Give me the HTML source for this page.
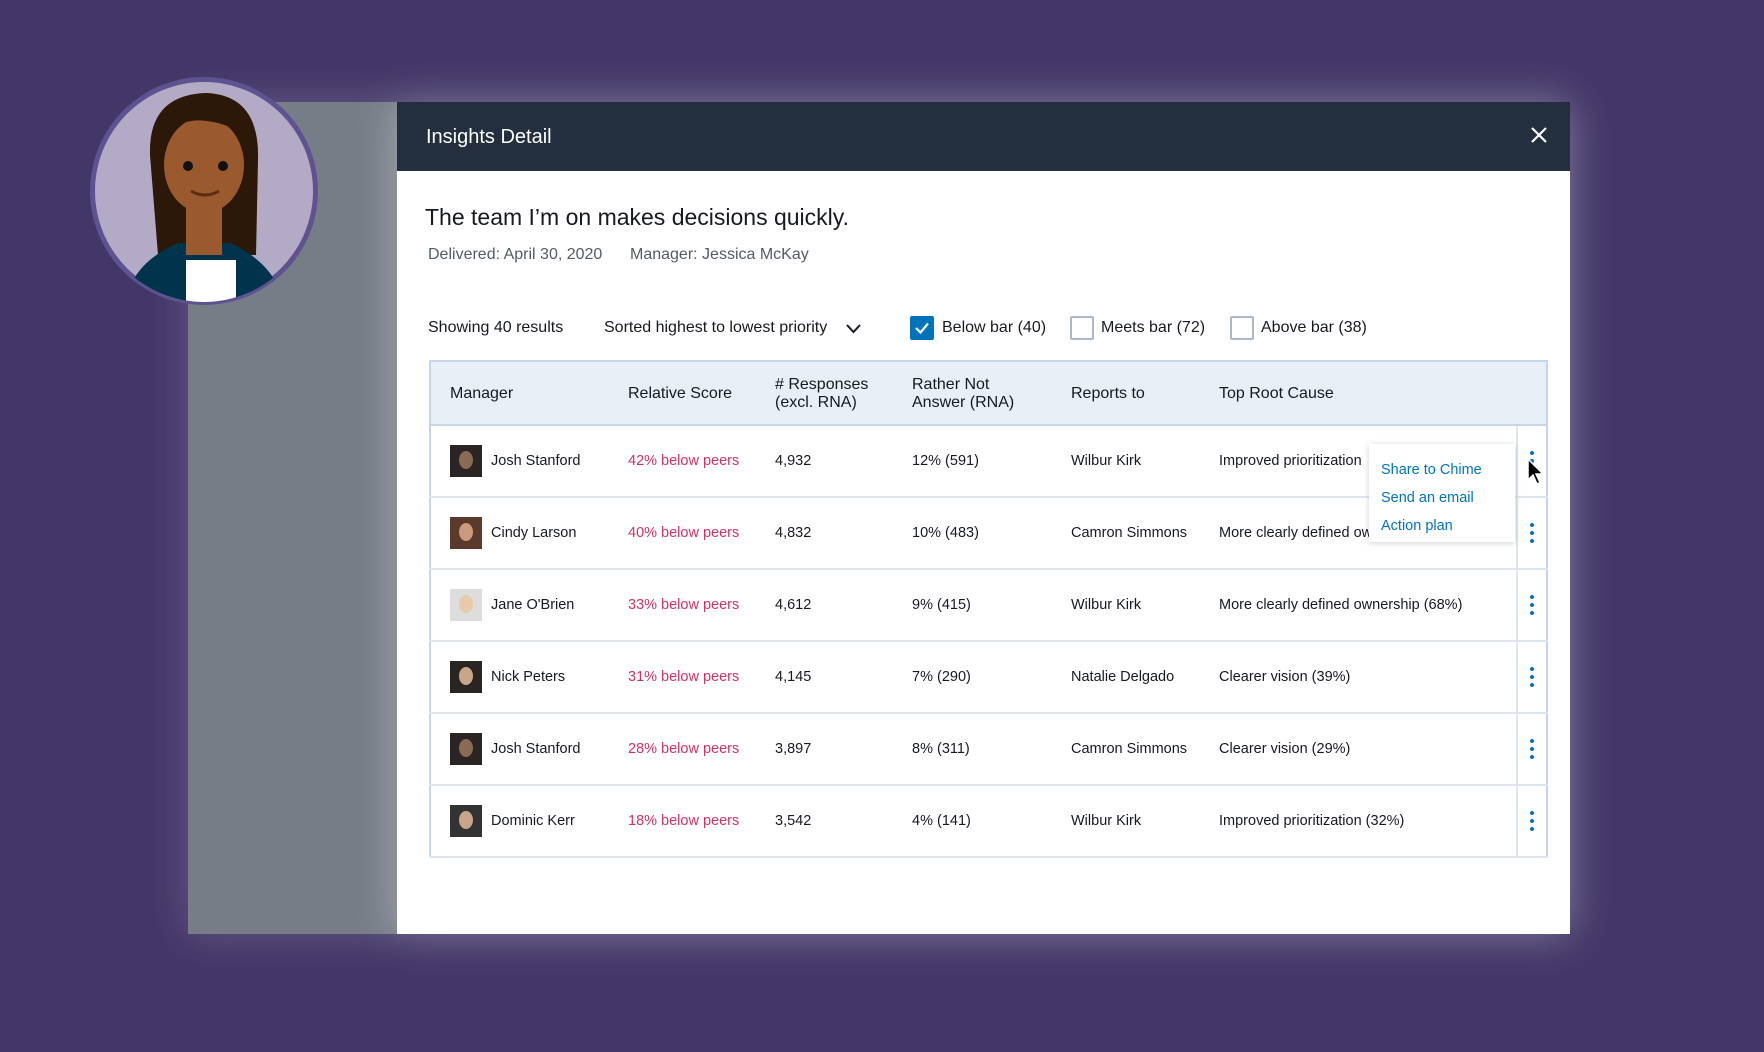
<!DOCTYPE html>
<html><head><meta charset="utf-8"><style>
*{margin:0;padding:0;box-sizing:border-box}
body{width:1764px;height:1052px;background:#433768;position:relative;overflow:hidden;font-family:"Liberation Sans",sans-serif;color:#16191f}
.gray{position:absolute;left:188px;top:102px;width:212px;height:832px;background:#777d87;box-shadow:0 0 40px rgba(255,255,255,.18)}
.modal{position:absolute;left:397px;top:102px;width:1173px;height:832px;background:#fff;box-shadow:0 0 40px rgba(255,255,255,.35)}
.hdr{height:69px;background:#232f3e;color:#fff;font-size:20px;padding:24px 29px}
.close{position:absolute;right:22px;top:24px}
.abs{position:absolute;white-space:nowrap}
h1{position:absolute;left:28px;top:102px;font-size:23px;font-weight:normal;color:#16191f}
.sub{font-size:16px;color:#545b64}
.f{font-size:16px;color:#16191f;top:217px}
.cb{position:absolute;top:214px;width:24px;height:24px;border:2px solid #aab7c4;border-radius:2px;background:#fff}
.cb.on{background:#0073bb;border-color:#0073bb}
table{position:absolute;left:32px;top:258px;width:1119px;border-collapse:collapse;border:2px solid #c5d6ea;font-size:14.5px;table-layout:fixed}
th{background:#e9eff6;font-weight:normal;text-align:left;height:64px;font-size:16px;line-height:18px;padding-top:2px;border-bottom:2px solid #c5d6ea}
td{height:72px;border-bottom:2px solid #dde6ef;white-space:nowrap;overflow:hidden}
.red{color:#d13267}
.av{display:inline-block;width:32px;height:32px;vertical-align:middle;margin-right:9px;background:#2a2522;position:relative;overflow:hidden}
.av i{position:absolute;left:9px;top:6px;width:14px;height:18px;border-radius:50%;background:#8a6a55}
.dots{border-left:2px solid #dde6ef;text-align:center}
.dot{width:4px;height:4px;border-radius:50%;background:#0073bb;margin:4px auto}
.pop{position:absolute;left:972px;top:342px;width:146px;height:98px;background:#fff;box-shadow:0 1px 6px rgba(0,0,0,.18);font-size:14.5px;color:#0073bb;padding:12px 12px;line-height:28px}
</style></head><body>
<div class="gray"></div>
<svg style="position:absolute;left:88px;top:75px" width="232" height="232" viewBox="0 0 232 232">
<defs><clipPath id="c"><circle cx="116" cy="116" r="111"/></clipPath></defs>
<circle cx="116" cy="116" r="114" fill="#5f5290"/>
<circle cx="116" cy="116" r="109" fill="#b3aac5"/>
<g clip-path="url(#c)">
<path d="M62 80 Q60 20 118 18 Q172 20 170 85 L168 180 L70 180 Z" fill="#2b1808"/>
<path d="M38 232 Q40 190 90 168 L142 168 Q190 190 196 232 Z" fill="#00344d"/>
<rect x="98" y="120" width="36" height="60" fill="#9b5a2d"/>
<rect x="98" y="185" width="50" height="50" fill="#fff"/>
<ellipse cx="116" cy="90" rx="40" ry="48" fill="#9b5a2d"/>
<path d="M76 70 Q90 30 150 55 Q140 40 118 36 Q80 40 76 70Z" fill="#2b1808"/>
<circle cx="100" cy="91" r="5" fill="#111"/><circle cx="135" cy="91" r="5" fill="#111"/>
<path d="M103 116 Q117 124 131 116" stroke="#5a2d12" stroke-width="3" fill="none"/>
</g></svg>
<div class="modal">
<div class="hdr">Insights Detail<svg class="close" width="18" height="18" viewBox="0 0 18 18"><path d="M2 2L16 16M16 2L2 16" stroke="#fff" stroke-width="2.2"/></svg></div>
<h1>The team I’m on makes decisions quickly.</h1>
<div class="abs sub" style="left:31px;top:144px">Delivered: April 30, 2020</div>
<div class="abs sub" style="left:233px;top:144px">Manager: Jessica McKay</div>
<div class="abs f" style="left:31px">Showing 40 results</div>
<div class="abs f" style="left:207px">Sorted highest to lowest priority</div>
<svg class="abs" style="left:449px;top:222px" width="15" height="10" viewBox="0 0 15 10"><path d="M1 1L7.5 8L14 1" stroke="#16191f" stroke-width="2" fill="none"/></svg>
<div class="cb on" style="left:513px"><svg width="20" height="20" viewBox="0 0 20 20"><path d="M4 10L8.5 14.5L16 5.5" stroke="#fff" stroke-width="2.2" fill="none"/></svg></div>
<div class="abs f" style="left:545px">Below bar (40)</div>
<div class="cb" style="left:673px"></div>
<div class="abs f" style="left:704px">Meets bar (72)</div>
<div class="cb" style="left:833px"></div>
<div class="abs f" style="left:864px">Above bar (38)</div>
<table>
<colgroup><col style="width:198px"><col style="width:147px"><col style="width:137px"><col style="width:159px"><col style="width:148px"><col><col style="width:30px"></colgroup>
<tr><th style="padding-left:19px">Manager</th><th>Relative Score</th><th># Responses<br>(excl. RNA)</th><th>Rather Not<br>Answer (RNA)</th><th>Reports to</th><th>Top Root Cause</th><th></th></tr>
<tr><td style="padding-left:19px"><span class="av"><i></i></span>Josh Stanford</td><td class="red">42% below peers</td><td>4,932</td><td>12% (591)</td><td>Wilbur Kirk</td><td>Improved prioritization</td><td class="dots"><div class="dot"></div><div class="dot"></div><div class="dot"></div></td></tr>
<tr><td style="padding-left:19px"><span class="av" style="background:#5a3a2a"><i style="background:#c99a7e"></i></span>Cindy Larson</td><td class="red">40% below peers</td><td>4,832</td><td>10% (483)</td><td>Camron Simmons</td><td>More clearly defined ow</td><td class="dots"><div class="dot"></div><div class="dot"></div><div class="dot"></div></td></tr>
<tr><td style="padding-left:19px"><span class="av" style="background:#ddd"><i style="background:#e8c9a8"></i></span>Jane O'Brien</td><td class="red">33% below peers</td><td>4,612</td><td>9% (415)</td><td>Wilbur Kirk</td><td>More clearly defined ownership (68%)</td><td class="dots"><div class="dot"></div><div class="dot"></div><div class="dot"></div></td></tr>
<tr><td style="padding-left:19px"><span class="av"><i style="background:#c9a58a"></i></span>Nick Peters</td><td class="red">31% below peers</td><td>4,145</td><td>7% (290)</td><td>Natalie Delgado</td><td>Clearer vision (39%)</td><td class="dots"><div class="dot"></div><div class="dot"></div><div class="dot"></div></td></tr>
<tr><td style="padding-left:19px"><span class="av"><i></i></span>Josh Stanford</td><td class="red">28% below peers</td><td>3,897</td><td>8% (311)</td><td>Camron Simmons</td><td>Clearer vision (29%)</td><td class="dots"><div class="dot"></div><div class="dot"></div><div class="dot"></div></td></tr>
<tr><td style="padding-left:19px"><span class="av" style="background:#333"><i style="background:#c9a58a"></i></span>Dominic Kerr</td><td class="red">18% below peers</td><td>3,542</td><td>4% (141)</td><td>Wilbur Kirk</td><td>Improved prioritization (32%)</td><td class="dots"><div class="dot"></div><div class="dot"></div><div class="dot"></div></td></tr>
</table>
<div class="pop">Share to Chime<br>Send an email<br>Action plan</div>
<svg class="abs" style="left:1129px;top:356px" width="20" height="28" viewBox="0 0 20 28"><path d="M2 1L2 22L7 17L11 26L14 24.5L10 16L17 16Z" fill="#000" stroke="#fff" stroke-width="1.5"/></svg>
</div>
</body></html>
